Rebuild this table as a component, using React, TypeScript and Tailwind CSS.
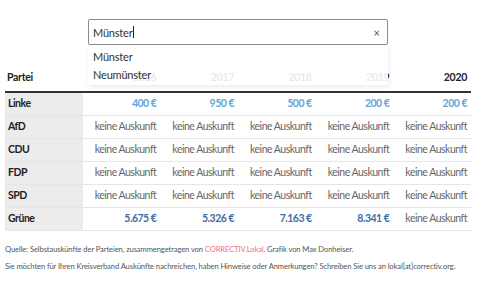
import React from "react";

const years = ["2016", "2017", "2018", "2019", "2020"];

type Cell = { v: string; kind: "na" | "light" | "dark" };
const na: Cell = { v: "keine Auskunft", kind: "na" };
const rows: { name: string; cells: Cell[] }[] = [
  {
    name: "Linke",
    cells: [
      { v: "400 €", kind: "light" },
      { v: "950 €", kind: "light" },
      { v: "500 €", kind: "light" },
      { v: "200 €", kind: "light" },
      { v: "200 €", kind: "light" },
    ],
  },
  { name: "AfD", cells: [na, na, na, na, na] },
  { name: "CDU", cells: [na, na, na, na, na] },
  { name: "FDP", cells: [na, na, na, na, na] },
  { name: "SPD", cells: [na, na, na, na, na] },
  {
    name: "Grüne",
    cells: [
      { v: "5.675 €", kind: "dark" },
      { v: "5.326 €", kind: "dark" },
      { v: "7.163 €", kind: "dark" },
      { v: "8.341 €", kind: "dark" },
      na,
    ],
  },
];

export default function App() {
  return (
    <div
      className="relative w-[500px] h-[282px] bg-white overflow-hidden text-[#222]"
      style={{ fontFamily: "Lato, 'Open Sans', sans-serif" }}
    >
      <div className="pt-[19px] pl-[88px]">
        <div className="w-[300px] h-[26px] border border-[#8a8a8a] rounded-[2px] flex items-center pl-[4px] pr-[7px]">
          <span className="text-[11px] text-[#333] leading-none tracking-[-0.2px]">Münster</span>
          <span className="w-px h-[12px] bg-[#222] ml-[1px]" />
          <span className="ml-auto text-[11px] text-[#555] leading-none">×</span>
        </div>
      </div>

      <div className="mx-[5px] w-[466px]">
        <div className="grid grid-cols-6 h-[46px] items-end pb-[5px] text-[10.5px] font-bold tracking-[-0.3px]">
          <div className="pl-[2px] text-[#222]">Partei</div>
          {years.map((y) => (
            <div key={y} className="text-right pr-[4px] text-[#222]">
              {y}
            </div>
          ))}
        </div>
        <div className="h-[2px] bg-[#333]" />
        {rows.map((r) => (
          <div key={r.name} className="grid grid-cols-6 h-[23px] border-b border-[#e6e6e6] text-[10.5px] tracking-[-0.5px]">
            <div className="bg-[#ececec] pl-[3px] flex items-center font-bold text-[#222]">{r.name}</div>
            {r.cells.map((c, i) => (
              <div
                key={i}
                className={
                  "flex items-center justify-end pr-[4px] " +
                  (c.kind === "na"
                    ? "text-[#666]"
                    : c.kind === "light"
                    ? "text-[#5ea6dc] font-bold"
                    : "text-[#3c6ea6] font-bold")
                }
              >
                {c.v}
              </div>
            ))}
          </div>
        ))}
      </div>

      <div className="pl-[5px] pt-[10px] text-[7.6px] text-[#555] leading-[17px] tracking-[-0.1px]">
        <div>
          Quelle: Selbstauskünfte der Parteien, zusammengetragen von{" "}
          <span className="text-[#e8748a]">CORRECTIV.Lokal</span>. Grafik von Max Donheiser.
        </div>
        <div>
          Sie möchten für Ihren Kreisverband Auskünfte nachreichen, haben Hinweise oder Anmerkungen? Schreiben Sie uns an lokal[at]correctiv.org.
        </div>
      </div>

      <div className="absolute left-[88px] top-[45px] w-[300px] h-[40px] bg-white/90 shadow-[1px_2px_4px_rgba(0,0,0,0.08)] pl-[5px] pt-[3px] text-[11px] text-[#333] tracking-[-0.2px]">
        <div className="h-[18px] flex items-center">Münster</div>
        <div className="h-[18px] flex items-center">Neumünster</div>
      </div>
    </div>
  );
}
